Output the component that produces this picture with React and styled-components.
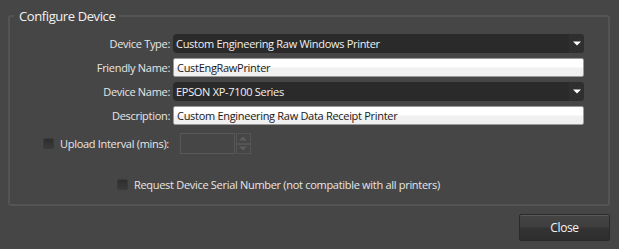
import React from "react";
import styled, { createGlobalStyle } from "styled-components";

const Global = createGlobalStyle`
  html, body { margin: 0; padding: 0; background: #464646; }
  body { font-family: "Open Sans", "Noto Sans", sans-serif; }
`;

const Page = styled.div`
  width: 619px;
  height: 249px;
  box-sizing: border-box;
  padding: 8px 9px 0 8px;
  display: flex;
  flex-direction: column;
  background: #464646;
`;

const Group = styled.fieldset`
  margin: 0;
  box-sizing: border-box;
  height: 198px;
  border: 2px solid #545454;
  border-radius: 3px;
  padding: 10px 24px 0 0;
  display: flex;
  flex-direction: column;
  min-width: 0;
`;

const Legend = styled.legend`
  margin-left: 4px;
  padding: 0 4px 0 5px;
  color: #f2f2f2;
  font-size: 13px;
  letter-spacing: -0.4px;
  line-height: 16px;
`;

const Form = styled.div`
  display: grid;
  grid-template-columns: 160px 1fr;
  column-gap: 3px;
  row-gap: 5px;
  align-items: center;
`;

const Label = styled.label`
  text-align: right;
  color: #e6e6e6;
  font-size: 11px;
  letter-spacing: -0.3px;
`;

const Combo = styled.div`
  height: 19px;
  border-radius: 4px;
  background: #2a2a2a;
  display: flex;
  align-items: center;
  color: #f0f0f0;
  font-size: 11px;
  letter-spacing: -0.3px;
  overflow: hidden;
`;

const ComboText = styled.span`
  flex: 1;
  padding-left: 3px;
`;

const ComboArrow = styled.span`
  width: 15px;
  height: 19px;
  display: flex;
  align-items: center;
  justify-content: center;
  background: #2f2f2f;
`;

const TextBox = styled.div`
  height: 19px;
  box-sizing: border-box;
  border: 1px solid #9a9a9a;
  border-radius: 2px;
  background: linear-gradient(#ffffff 0%, #ffffff 45%, #f0f0f0 55%, #f0f0f0 100%);
  color: #1a1a1a;
  font-size: 11px;
  letter-spacing: -0.3px;
  display: flex;
  align-items: center;
  padding-left: 3px;
`;

const CheckRow = styled.div`
  display: flex;
  align-items: center;
  padding-left: ${(p) => p.$indent}px;
  margin-top: ${(p) => p.$top}px;
  color: #e6e6e6;
  font-size: 11px;
  letter-spacing: -0.3px;
`;

const Check = styled.span`
  width: 9px;
  height: 9px;
  border-radius: 2px;
  border: 1px solid #3a3a3a;
  background: linear-gradient(#2e2e2e, #3a3a3a);
  margin-right: 6px;
  flex: none;
`;

const Spinner = styled.div`
  display: flex;
  margin-left: 11px;
  height: 21px;
`;

const SpinBox = styled.div`
  width: 55px;
  box-sizing: border-box;
  border: 1px solid #585858;
`;

const SpinButtons = styled.div`
  display: flex;
  flex-direction: column;
  width: 15px;
  margin-left: 1px;
`;

const SpinButton = styled.div`
  flex: 1;
  box-sizing: border-box;
  border: 1px solid #545454;
  display: flex;
  align-items: center;
  justify-content: center;
`;

const Footer = styled.div`
  display: flex;
  justify-content: flex-end;
  padding-top: 8px;
`;

const Button = styled.button`
  width: 91px;
  height: 27px;
  border: 1px solid #2a2a2a;
  border-radius: 2px;
  background: linear-gradient(#454545 0%, #3e3e3e 48%, #333333 52%, #2e2e2e 100%);
  box-shadow: inset 0 1px 0 #5a5a5a;
  color: #f4f4f4;
  font-family: "Open Sans", "Noto Sans", sans-serif;
  font-size: 12px;
  letter-spacing: -0.4px;
  padding: 0;
`;

const Arrow = ({ up, color = "#ffffff" }) => (
  <svg width="8" height="5" viewBox="0 0 8 5">
    <polygon points={up ? "0,4.5 8,4.5 4,0.5" : "0,0.5 8,0.5 4,4.5"} fill={color} />
  </svg>
);

export default function App() {
  return (
    <>
      <Global />
      <Page>
        <Group>
          <Legend>Configure Device</Legend>
          <Form>
            <Label>Device Type:</Label>
            <Combo>
              <ComboText>Custom Engineering Raw Windows Printer</ComboText>
              <ComboArrow><Arrow /></ComboArrow>
            </Combo>
            <Label>Friendly Name:</Label>
            <TextBox>CustEngRawPrinter</TextBox>
            <Label>Device Name:</Label>
            <Combo>
              <ComboText>EPSON XP-7100 Series</ComboText>
              <ComboArrow><Arrow /></ComboArrow>
            </Combo>
            <Label>Description:</Label>
            <TextBox>Custom Engineering Raw Data Receipt Printer</TextBox>
          </Form>
          <CheckRow $indent={33} $top={8}>
            <Check />
            Upload Interval (mins):
            <Spinner>
              <SpinBox />
              <SpinButtons>
                <SpinButton><Arrow up color="#5c5c5c" /></SpinButton>
                <SpinButton><Arrow color="#5c5c5c" /></SpinButton>
              </SpinButtons>
            </Spinner>
          </CheckRow>
          <CheckRow $indent={107} $top={23}>
            <Check />
            Request Device Serial Number (not compatible with all printers)
          </CheckRow>
        </Group>
        <Footer>
          <Button>Close</Button>
        </Footer>
      </Page>
    </>
  );
}
